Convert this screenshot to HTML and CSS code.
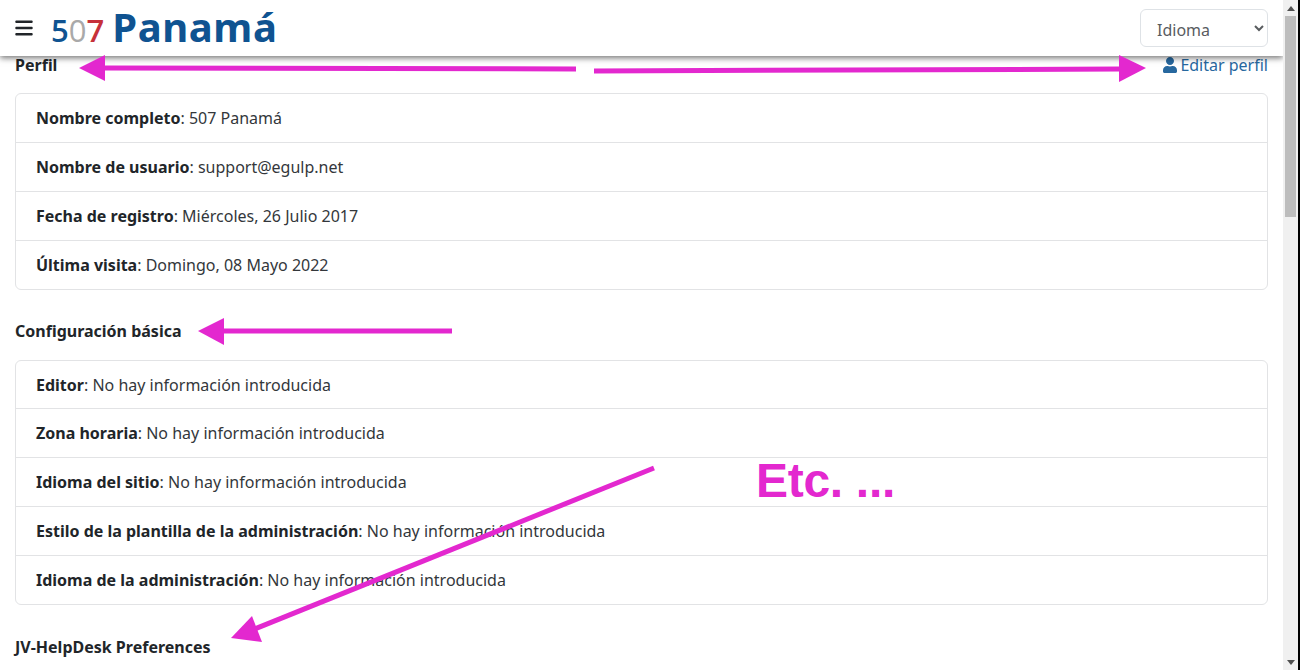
FILE: index.html
```html
<!DOCTYPE html>
<html lang="es">
<head>
  <meta charset="UTF-8" />
  <meta name="viewport" content="width=device-width, initial-scale=1" />
  <title>Perfil - 507 Panamá</title>
  <link rel="stylesheet" href="styles.css">
</head>
<body>
  <div class="window">
    <div class="page">
      <header class="topbar">
        <button class="menu-btn" aria-label="Menu">
          <svg viewBox="0 0 448 512" width="18" height="20"><path d="M0 96C0 78.3 14.3 64 32 64H416c17.7 0 32 14.3 32 32s-14.3 32-32 32H32C14.3 128 0 113.7 0 96zM0 256c0-17.7 14.3-32 32-32H416c17.7 0 32 14.3 32 32s-14.3 32-32 32H32c-17.7 0-32-14.3-32-32zM0 416c0-17.7 14.3-32 32-32H416c17.7 0 32 14.3 32 32s-14.3 32-32 32H32c-17.7 0-32-14.3-32-32z"/></svg>
        </button>
        <a class="logo" href="#"><span class="logo-num"><span class="n-blue">5</span><span class="n-grey">0</span><span class="n-red">7</span></span><span class="logo-name">Panamá</span></a>
        <select class="lang-select">
          <option>Idioma</option>
          <option>Español</option>
          <option>English</option>
        </select>
      </header>

      <main class="content">
        <div class="section-head">
          <h2>Perfil</h2>
          <a class="edit-link" href="#">
            <svg viewBox="0 0 448 512" width="14" height="16"><path d="M224 256c70.7 0 128-57.3 128-128S294.7 0 224 0 96 57.3 96 128s57.3 128 128 128zm89.6 32h-16.7c-22.2 10.2-46.9 16-72.9 16s-50.6-5.8-72.9-16h-16.7C60.2 288 0 348.2 0 422.4V464c0 26.5 21.5 48 48 48h352c26.5 0 48-21.5 48-48v-41.6c0-74.2-60.2-134.4-134.4-134.4z"/></svg>
            Editar perfil
          </a>
        </div>
        <ul class="info-list">
          <li><strong>Nombre completo</strong>: 507 Panamá</li>
          <li><strong>Nombre de usuario</strong>: support@egulp.net</li>
          <li><strong>Fecha de registro</strong>: Miércoles, 26 Julio 2017</li>
          <li><strong>Última visita</strong>: Domingo, 08 Mayo 2022</li>
        </ul>

        <div class="section-head">
          <h2>Configuración básica</h2>
        </div>
        <ul class="info-list info-list-tight">
          <li><strong>Editor</strong>: No hay información introducida</li>
          <li><strong>Zona horaria</strong>: No hay información introducida</li>
          <li><strong>Idioma del sitio</strong>: No hay información introducida</li>
          <li><strong>Estilo de la plantilla de la administración</strong>: No hay información introducida</li>
          <li><strong>Idioma de la administración</strong>: No hay información introducida</li>
        </ul>

        <div class="section-head">
          <h2>JV-HelpDesk Preferences</h2>
        </div>
      </main>

      <!-- annotations drawn on top of the screenshot -->
      <svg class="notes" width="1283" height="670" viewBox="0 0 1283 670">
        <line x1="576" y1="69" x2="104" y2="68" />
        <polygon points="79,68 105,55 105,81" />
        <line x1="594" y1="71" x2="1120" y2="69" />
        <polygon points="1146,68 1119,55 1119,82" />
        <line x1="452" y1="331" x2="223" y2="331" />
        <polygon points="198,331 224,318 224,345" />
        <line x1="654" y1="468" x2="252" y2="630" />
        <polygon points="231,638 252,616 262,642" />
        <text x="756" y="497">Etc. ...</text>
      </svg>
    </div>

    <div class="scrollbar">
      <span class="arrow-up"></span>
      <div class="track"><div class="thumb"></div></div>
      <span class="arrow-down"></span>
    </div>
    <div class="edge"></div>
  </div>
</body>
</html>
```

FILE: styles.css
```css
html, body {
  margin: 0;
  height: 100%;
  overflow: hidden;
}
body {
  font-family: "Noto Sans", "Open Sans", sans-serif;
  font-size: 16px;
  line-height: 24px;
  color: #212529;
  background: #fff;
}
.window {
  display: flex;
  height: 670px;
}
.page {
  flex: 1;
  min-width: 0;
  position: relative;
  overflow: hidden;
}

/* top bar */
.topbar {
  height: 56px;
  box-sizing: border-box;
  padding: 0 15px;
  display: flex;
  align-items: center;
  background: #fff;
  box-shadow: 0 2px 6px rgba(0, 0, 0, 0.55);
  position: relative;
  z-index: 2;
}
.menu-btn {
  border: none;
  background: none;
  padding: 0;
  width: 18px;
  height: 20px;
  margin-top: -1px;
  color: #212529;
}
.menu-btn svg {
  display: block;
  fill: currentColor;
}
.logo {
  margin-left: 18px;
  display: flex;
  align-items: baseline;
  gap: 8px;
  text-decoration: none;
  white-space: nowrap;
  color: #0f5391;
}
.logo-num {
  font-family: "Open Sans", sans-serif;
  font-size: 31px;
  line-height: 48px;
}
.n-blue {
  color: #0f5391;
  font-weight: 600;
}
.n-grey {
  color: #a9a9a9;
  font-weight: 400;
}
.n-red {
  color: #c6313a;
  font-weight: 600;
}
.logo-name {
  font-size: 40px;
  line-height: 48px;
  font-weight: 700;
  letter-spacing: 0.6px;
}
.lang-select {
  margin-left: auto;
  width: 128px;
  height: 38px;
  padding: 3px 12px 0;
  font: inherit;
  color: #595c5f;
  background: #fff;
  border: 1px solid #dee2e6;
  border-radius: 6px;
}

/* profile content */
.content {
  padding: 0 15px;
}
.section-head {
  display: flex;
  justify-content: space-between;
  align-items: center;
  height: 24px;
}
.section-head h2 {
  margin: 0;
  font-size: 16px;
  font-weight: 700;
  line-height: 24px;
}
.edit-link {
  color: #27689f;
  text-decoration: none;
  display: flex;
  align-items: center;
  gap: 3px;
}
.edit-link svg {
  fill: currentColor;
}
.content > .section-head:first-child {
  margin-top: -3px;
}
.info-list {
  list-style: none;
  margin: 16px 0 29px;
  padding: 0;
  border: 1px solid #e2e3e5;
  border-radius: 6px;
  color: #33373b;
}
.info-list strong {
  color: #212529;
}
.info-list li {
  padding: 12px 20px;
  border-bottom: 1px solid #e2e3e5;
}
.info-list li:last-child {
  border-bottom: none;
}
.info-list-tight {
  margin-top: 17px;
  margin-bottom: 30px;
}
.info-list-tight li:first-child {
  padding-bottom: 11px;
}

/* screenshot annotations */
.notes {
  position: absolute;
  left: 0;
  top: 0;
  z-index: 3;
  pointer-events: none;
}
.notes line {
  stroke: #e328cf;
  stroke-width: 5;
}
.notes polygon {
  fill: #e328cf;
}
.notes text {
  font-family: "Liberation Sans", Arial, sans-serif;
  font-size: 48px;
  font-weight: 700;
  letter-spacing: -0.3px;
  fill: #e328cf;
}

/* window scrollbar */
.scrollbar {
  width: 15px;
  flex: none;
  background: #f0f0f0;
  display: flex;
  flex-direction: column;
  align-items: center;
}
.track {
  flex: 1;
  width: 100%;
}
.thumb {
  width: 11px;
  height: 201px;
  margin: 0 auto;
  background: #bdbdbd;
}
.arrow-up, .arrow-down {
  flex: none;
  width: 0;
  height: 0;
  margin: 6px 0 5px;
  border-left: 4px solid transparent;
  border-right: 4px solid transparent;
}
.arrow-up {
  border-bottom: 5px solid #505050;
}
.arrow-down {
  border-top: 5px solid #505050;
}
.edge {
  width: 2px;
  flex: none;
  background: #000;
}
```
